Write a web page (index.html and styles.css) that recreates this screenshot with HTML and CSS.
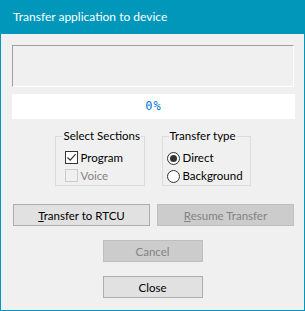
FILE: index.html
```html
<!DOCTYPE html>
<html lang="en">
<head>
    <meta charset="UTF-8">
    <title>Transfer application to device</title>
    <link rel="stylesheet" href="styles.css">
</head>
<body>
    <div class="window">
        <div class="titlebar">Transfer application to device</div>
        <div class="content">
            <div class="status"></div>
            <div class="progress">0%</div>

            <div class="groups">
                <fieldset class="group sections">
                    <legend>Select Sections</legend>
                    <label class="option">
                        <span class="check">
                            <svg width="11" height="11" viewBox="0 0 11 11"><path d="M1.5 5.5 L4.2 8.2 L9.6 2.2" fill="none" stroke="#333" stroke-width="1.2"/></svg>
                        </span>
                        Program
                    </label>
                    <label class="option disabled">
                        <span class="check"></span>
                        Voice
                    </label>
                </fieldset>
                <fieldset class="group type">
                    <legend>Transfer type</legend>
                    <label class="option">
                        <span class="radio on"></span>
                        Direct
                    </label>
                    <label class="option">
                        <span class="radio"></span>
                        Background
                    </label>
                </fieldset>
            </div>

            <div class="btn-row">
                <button class="btn wide"><u>T</u>ransfer to RTCU</button>
                <button class="btn wide" disabled><u>R</u>esume Transfer</button>
            </div>
            <div class="btn-stack">
                <button class="btn small" disabled>Cancel</button>
                <button class="btn small">Close</button>
            </div>
        </div>
    </div>
</body>
</html>
```

FILE: styles.css
```css
body {
    margin: 0;
    font-family: Lato, "Noto Sans", sans-serif;
    font-size: 11.5px;
    color: #000;
}
.window {
    width: 305px;
    height: 311px;
    box-sizing: border-box;
    border: 1px solid #0097bb;
    border-top: none;
    background-color: #f0f0f0;
    display: flex;
    flex-direction: column;
}
.titlebar {
    height: 34px;
    margin: 0 -1px;
    padding-left: 13px;
    background-color: #0097bb;
    color: #fff;
    font-size: 12px;
    line-height: 33px;
}
.content {
    display: flex;
    flex-direction: column;
    padding: 11px 9px 0 11px;
}
.status {
    height: 42px;
    box-sizing: border-box;
    border-top: 1px solid #a0a0a0;
    border-left: 1px solid #a0a0a0;
    border-bottom: 1px solid #fff;
    border-right: 1px solid #fff;
    width: 282px;
}
.progress {
    margin-top: 7px;
    width: 283px;
    height: 25px;
    background-color: #fff;
    color: #0078d7;
    font-family: "DejaVu Sans Mono", monospace;
    font-size: 12px;
    letter-spacing: 1px;
    line-height: 25px;
    text-align: center;
}
.groups {
    display: flex;
    justify-content: center;
    gap: 17px;
    margin: 10px -9px 0 -11px;
}
.group {
    margin: 0;
    padding: 6px 0 0 0;
    border: 1px solid #dcdcdc;
    min-width: 0;
}
.group legend {
    padding: 0 1px;
    margin-left: 6px;
    line-height: 14px;
    white-space: nowrap;
}
.sections {
    width: 90px;
    box-sizing: border-box;
}
.sections legend {
    margin-left: 7px;
}
.type {
    width: 89px;
    box-sizing: border-box;
}
.option {
    display: flex;
    align-items: flex-start;
    height: 18px;
    line-height: 17px;
    gap: 3px;
    white-space: nowrap;
}
.sections .option {
    padding-left: 9px;
}
.type .option {
    padding-left: 4px;
}
.check {
    width: 13px;
    height: 13px;
    box-sizing: border-box;
    margin-top: 2px;
    border: 1px solid #333;
    background-color: #fff;
    display: flex;
    align-items: center;
    justify-content: center;
}
.option.disabled {
    color: #838383;
}
.option.disabled .check {
    border-color: #cccccc;
    background-color: #f0f0f0;
}
.radio {
    width: 13px;
    height: 13px;
    box-sizing: border-box;
    margin-top: 3px;
    border: 1px solid #333;
    border-radius: 50%;
    background-color: #fff;
    display: flex;
    align-items: center;
    justify-content: center;
}
.radio.on::after {
    content: "";
    width: 7px;
    height: 7px;
    border-radius: 50%;
    background-color: #333;
}
.btn {
    font-family: inherit;
    font-size: 11.5px;
    height: 22px;
    padding: 0;
    background-color: #e1e1e1;
    border: 1px solid #adadad;
    color: #000;
}
.btn:disabled {
    background-color: #cccccc;
    border-color: #bfbfbf;
    color: #838383;
}
.btn-row {
    display: flex;
    gap: 7px;
    margin: 18px 0 0 1px;
}
.wide {
    width: 137px;
}
.btn-stack {
    display: flex;
    flex-direction: column;
    align-items: center;
    gap: 14px;
    margin: 14px -9px 0 -11px;
}
.small {
    width: 100px;
}
```
